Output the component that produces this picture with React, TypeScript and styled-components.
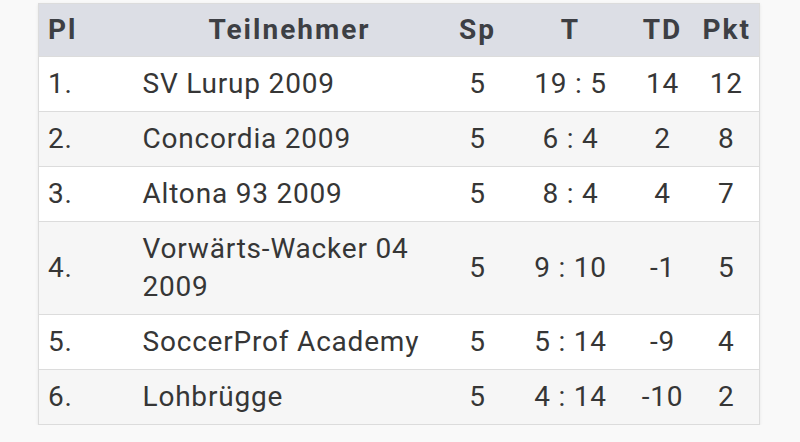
import React, { FC } from "react";
import styled, { createGlobalStyle } from "styled-components";

const GlobalStyle = createGlobalStyle`
  html, body {
    margin: 0;
    padding: 0;
    background: #f9f9f9;
    font-family: Roboto, "Liberation Sans", sans-serif;
  }
`;

const colors = {
  text: "#363636",
  head: "#3d3f44",
  headBg: "#dcdee5",
  border: "#dcdcdc",
  stripe: "#f6f6f6",
};

const Styled = {
  Wrapper: styled.div`
    padding: 3px 0 0 38px;
  `,
  Table: styled.table`
    width: 721px;
    border-collapse: collapse;
    table-layout: fixed;
    background: #fff;
    border: 1px solid ${colors.border};
    box-shadow: 0 1px 3px rgba(0, 0, 0, 0.08);
    color: ${colors.text};
    font-size: 28px;
    letter-spacing: 0.8px;
  `,
  Head: styled.th<{ $align?: string }>`
    background: ${colors.headBg};
    color: ${colors.head};
    font-weight: 700;
    letter-spacing: 2px;
    line-height: 36px;
    padding: 8px 9px;
    text-align: ${(p) => p.$align ?? "center"};
  `,
  Row: styled.tr`
    border-top: 1px solid ${colors.border};
    &:nth-child(even) {
      background: ${colors.stripe};
    }
  `,
  Cell: styled.td<{ $align?: string }>`
    line-height: 38px;
    padding: 8px 9px;
    vertical-align: middle;
    text-align: ${(p) => p.$align ?? "center"};
  `,
};

interface Team {
  name: string;
  games: number;
  goals: string;
  diff: number;
  points: number;
}

const teams: Team[] = [
  { name: "SV Lurup 2009", games: 5, goals: "19 : 5", diff: 14, points: 12 },
  { name: "Concordia 2009", games: 5, goals: "6 : 4", diff: 2, points: 8 },
  { name: "Altona 93 2009", games: 5, goals: "8 : 4", diff: 4, points: 7 },
  { name: "Vorwärts-Wacker 04 2009", games: 5, goals: "9 : 10", diff: -1, points: 5 },
  { name: "SoccerProf Academy", games: 5, goals: "5 : 14", diff: -9, points: 4 },
  { name: "Lohbrügge", games: 5, goals: "4 : 14", diff: -10, points: 2 },
];

const App: FC = () => {
  return (
    <>
      <GlobalStyle />
      <Styled.Wrapper>
        <Styled.Table>
          <colgroup>
            <col style={{ width: 95 }} />
            <col style={{ width: 312 }} />
            <col style={{ width: 64 }} />
            <col style={{ width: 122 }} />
            <col style={{ width: 62 }} />
            <col style={{ width: 66 }} />
          </colgroup>
          <thead>
            <tr>
              <Styled.Head $align="left">Pl</Styled.Head>
              <Styled.Head>Teilnehmer</Styled.Head>
              <Styled.Head>Sp</Styled.Head>
              <Styled.Head>T</Styled.Head>
              <Styled.Head>TD</Styled.Head>
              <Styled.Head>Pkt</Styled.Head>
            </tr>
          </thead>
          <tbody>
            {teams.map((t, i) => (
              <Styled.Row key={t.name}>
                <Styled.Cell $align="left">{i + 1}.</Styled.Cell>
                <Styled.Cell $align="left">{t.name}</Styled.Cell>
                <Styled.Cell>{t.games}</Styled.Cell>
                <Styled.Cell>{t.goals}</Styled.Cell>
                <Styled.Cell>{t.diff}</Styled.Cell>
                <Styled.Cell>{t.points}</Styled.Cell>
              </Styled.Row>
            ))}
          </tbody>
        </Styled.Table>
      </Styled.Wrapper>
    </>
  );
};

export default App;
